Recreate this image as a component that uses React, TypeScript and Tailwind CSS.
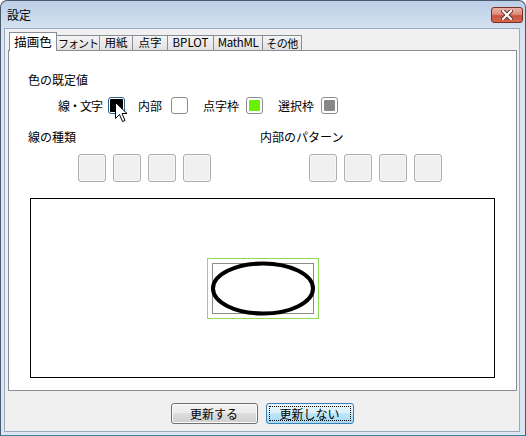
import React from "react";

const FONT = "font-['Noto_Sans_CJK_JP','Liberation_Sans',sans-serif]";

function Swatch({ fill, active }: { fill: string; active?: boolean }) {
  return (
    <div
      className={
        "shrink-0 w-[17px] h-[17px] rounded-[3px] border bg-white flex " +
        (active ? "border-[#2d5f8a] p-[1px]" : "border-[#8c8c8c] p-[2px]")
      }
    >
      <div className="flex-1 rounded-[1px]" style={{ background: fill }} />
    </div>
  );
}

function SqBtn() {
  return (
    <div className="w-[28px] h-[28px] rounded-[3px] border border-[#adadad] bg-[#f0f0f0] shadow-[inset_0_0_0_1px_#f7f7f7]" />
  );
}

const tabs: { label: string; w: number; cls: string }[] = [
  { label: "フォント", w: 43, cls: "text-[11px] tracking-[-1px]" },
  { label: "用紙", w: 34, cls: "text-[11.5px]" },
  { label: "点字", w: 36, cls: "text-[11.5px]" },
  { label: "BPLOT", w: 47, cls: "text-[11.5px]" },
  { label: "MathML", w: 50, cls: "text-[11.5px] tracking-[-0.3px]" },
  { label: "その他", w: 40, cls: "text-[11px] tracking-[-0.5px]" },
];

export default function App() {
  return (
    <div className={"w-[526px] h-[436px] bg-white text-[12px] leading-none text-black " + FONT}>
      <div className="relative w-full h-full rounded-t-[7px] border border-[#4a5a6e] border-b-[#3f7f9f] bg-[linear-gradient(to_bottom,#bccfe6_0px,#d3e0ef_26px,#dbe6f3_40px,#dbe6f3_100%)] flex flex-col">
        {/* title bar */}
        <div className="h-[27px] flex items-center justify-between pl-[6px] pr-[2px]">
          <span className="text-[12px] text-black">設定</span>
          <div className="w-[32px] h-[16px] rounded-[3px] border border-[#7a2f25] bg-[linear-gradient(to_bottom,#eab2a5_0%,#dc8d7c_45%,#c9533d_55%,#d4674d_100%)] flex items-center justify-center">
            <svg width="12" height="10" viewBox="0 0 12 10">
              <path d="M2 1 L10 9 M10 1 L2 9" stroke="#5a2a22" strokeWidth="4" strokeLinecap="square" />
              <path d="M2 1 L10 9 M10 1 L2 9" stroke="#ffffff" strokeWidth="2.2" strokeLinecap="square" />
            </svg>
          </div>
        </div>
        {/* content */}
        <div className="ml-[3px] mr-[5px] mb-[3px] flex-1 bg-[#f0f0f0] border border-[#9aaabd] flex flex-col pt-[3px] px-[3px]">
          {/* tabs */}
          <div className="flex items-end h-[18px] relative z-10">
            <div className="shrink-0 ml-[1px] w-[48px] h-[19px] -mb-[1px] bg-white border border-b-0 border-[#898c95] flex items-center justify-center text-[12.5px] whitespace-nowrap">
              描画色
            </div>
            {tabs.map((t, i) => (
              <div
                key={t.label}
                style={{ width: t.w }}
                className={
                  "shrink-0 h-[15px] border border-b-0 border-[#898c95] bg-[linear-gradient(to_bottom,#f4f4f4,#e1e1e1)] flex items-center justify-center whitespace-nowrap overflow-hidden " +
                  t.cls +
                  (i === 0 ? " border-l-0" : " -ml-[1px]")
                }
              >
                {t.label}
              </div>
            ))}
          </div>
          {/* panel */}
          <div className="w-[509px] h-[341px] bg-white border border-[#898c95] flex flex-col">
            <div className="mt-[23px] ml-[19px]">色の既定値</div>
            <div className="mt-[11px] ml-[49px] flex items-center h-[17px] whitespace-nowrap">
              <span className="shrink-0 w-[50px] tracking-[-1px]">線・文字</span>
              <div className="relative shrink-0">
                <Swatch fill="#000000" active />
                <svg className="absolute left-[7px] top-[5px]" width="13" height="21" viewBox="0 0 13 21">
                  <path d="M0.5 0.5 L0.5 16.5 L4.5 12.5 L7.5 19.5 L10 18.5 L7 11.5 L12 11.5 Z" fill="#ffffff" stroke="#000000" strokeWidth="1" />
                </svg>
              </div>
              <span className="shrink-0 ml-[13px] w-[33px]">内部</span>
              <Swatch fill="#ffffff" />
              <span className="shrink-0 ml-[15px] w-[43px]">点字枠</span>
              <Swatch fill="#66f200" />
              <span className="shrink-0 ml-[15px] w-[43px]">選択枠</span>
              <Swatch fill="#888888" />
            </div>
            <div className="mt-[17px] ml-[19px] flex">
              <div className="w-[232px] flex flex-col">
                <span>線の種類</span>
                <div className="mt-[11px] ml-[50px] flex gap-[7px]">
                  <SqBtn />
                  <SqBtn />
                  <SqBtn />
                  <SqBtn />
                </div>
              </div>
              <div className="flex flex-col">
                <span>内部のパターン</span>
                <div className="mt-[11px] ml-[49px] flex gap-[7px]">
                  <SqBtn />
                  <SqBtn />
                  <SqBtn />
                  <SqBtn />
                </div>
              </div>
            </div>
            <div className="mt-[16px] ml-[21px] w-[465px] h-[180px] border border-black bg-white flex items-center justify-center">
              <svg width="112" height="61" viewBox="0 0 112 61">
                <rect x="0.5" y="0.5" width="111" height="60" fill="none" stroke="#8fdc5c" />
                <rect x="5.5" y="5.5" width="101" height="50" fill="none" stroke="#8a8a8a" />
                <ellipse cx="56" cy="30.5" rx="50" ry="25" fill="none" stroke="#000" strokeWidth="4" />
              </svg>
            </div>
          </div>
          {/* buttons */}
          <div className="mt-[12px] flex justify-center gap-[8px]">
            <div className="w-[87px] h-[21px] rounded-[3px] border border-[#707070] bg-[linear-gradient(to_bottom,#f2f2f2_0%,#ebebeb_50%,#dddddd_50%,#cfcfcf_100%)] shadow-[inset_0_0_0_1px_#fbfbfb] flex items-center justify-center">
              更新する
            </div>
            <div className="w-[88px] h-[21px] rounded-[3px] border border-[#3c7fb1] bg-[linear-gradient(to_bottom,#eaf6fd_0%,#d9f0fc_50%,#bee6fd_50%,#a7d9f5_100%)] outline-dotted outline-1 outline-black outline-offset-[-4px] flex items-center justify-center">
              更新しない
            </div>
          </div>
        </div>
      </div>
    </div>
  );
}
